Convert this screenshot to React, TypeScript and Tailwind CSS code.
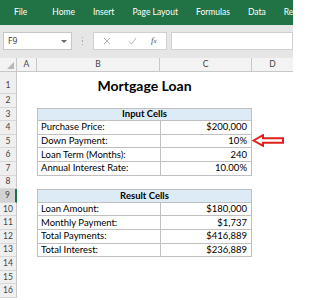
import React from "react";

const tabs = ["File", "Home", "Insert", "Page Layout", "Formulas", "Data", "Review"];

const inputRows = [
  { label: "Purchase Price:", value: "$200,000" },
  { label: "Down Payment:", value: "10%" },
  { label: "Loan Term (Months):", value: "240" },
  { label: "Annual Interest Rate:", value: "10.00%" },
];

const resultRows = [
  { label: "Loan Amount:", value: "$180,000" },
  { label: "Monthly Payment:", value: "$1,737" },
  { label: "Total Payments:", value: "$416,889" },
  { label: "Total Interest:", value: "$236,889" },
];

const RowHead = ({ n, tall, active }: { n: number; tall?: boolean; active?: boolean }) => (
  <div
    className={`w-[17px] shrink-0 flex justify-center text-[8.5px] text-[#444] border-b border-[#d8d8d8] ${
      tall ? "h-[22px] items-end pb-[1px]" : "h-[13.6px] items-center"
    } ${active ? "bg-[#d3d3d3] border-r-2 border-r-[#217346]" : "bg-[#efefef] border-r border-r-[#c8c8c8]"}`}
  >
    {n}
  </div>
);

const Spacer = () => <div className="w-[20px] shrink-0" />;

const TableHeader = ({ title }: { title: string }) => (
  <div className="w-[215px] h-full bg-[#ddebf7] border border-[#c0c0c0] flex items-center justify-center font-bold">
    {title}
  </div>
);

const TableRow = ({ label, value }: { label: string; value: string }) => (
  <div className="flex h-full">
    <div className="w-[123px] h-full border-l border-b border-[#c0c0c0] flex items-center pl-[3px]">{label}</div>
    <div className="w-[92px] h-full border-l border-r border-b border-[#c0c0c0] flex items-center justify-end pr-[4px]">
      {value}
    </div>
  </div>
);

export default function App() {
  const rows: { n: number; content?: React.ReactNode }[] = [];
  rows.push({ n: 2 });
  rows.push({ n: 3, content: <TableHeader title="Input Cells" /> });
  inputRows.forEach((r, i) => rows.push({ n: 4 + i, content: <TableRow {...r} /> }));
  rows.push({ n: 8 });
  rows.push({ n: 9, content: <TableHeader title="Result Cells" /> });
  resultRows.forEach((r, i) => rows.push({ n: 10 + i, content: <TableRow {...r} /> }));
  [14, 15, 16].forEach((n) => rows.push({ n }));

  return (
    <div className="w-[293px] h-[300px] overflow-hidden bg-white font-['Lato',sans-serif] relative">
      {/* ribbon */}
      <div className="h-[25px] bg-[#217346] flex items-center pl-[14px] text-white text-[8.5px] whitespace-nowrap overflow-hidden">
        {tabs.map((t, i) => (
          <span key={t} className={`shrink-0 ${i === 0 ? "mr-[25px]" : "mr-[18px]"}`}>
            {t}
          </span>
        ))}
      </div>

      {/* formula bar */}
      <div className="h-[33px] bg-[#e6e6e6] flex items-start pt-[7px] pl-[3px] gap-0">
        <div className="w-[69px] h-[18px] bg-white border border-[#c6c6c6] flex items-center justify-between px-[4px] text-[8.5px] text-[#333] font-['Open_Sans',sans-serif]">
          <span>F9</span>
          <span className="w-0 h-0 border-l-[3px] border-r-[3px] border-t-[3px] border-l-transparent border-r-transparent border-t-[#666]" />
        </div>
        <div className="w-[21px] h-[18px] flex flex-col items-center justify-center gap-[2px]">
          <span className="w-[1.5px] h-[1.5px] bg-[#aaa]" />
          <span className="w-[1.5px] h-[1.5px] bg-[#aaa]" />
          <span className="w-[1.5px] h-[1.5px] bg-[#aaa]" />
        </div>
        <div className="w-[74px] h-[18px] bg-white border border-[#d0d0d0] flex items-center text-[#b0b0b0]">
          <svg width="8" height="8" viewBox="0 0 8 8" className="ml-[9px]">
            <path d="M1 1L7 7M7 1L1 7" stroke="#b5b5b5" strokeWidth="1" />
          </svg>
          <svg width="9" height="8" viewBox="0 0 9 8" className="ml-[17px]">
            <path d="M1 4.5L3.5 7L8 1" stroke="#b5b5b5" strokeWidth="1" fill="none" />
          </svg>
          <span className="ml-[14px] text-[9px] italic text-[#555] font-['Liberation_Serif',serif]">
            f<span className="text-[7px]">x</span>
          </span>
        </div>
        <div className="ml-[4px] flex-1 h-[18px] bg-white border border-[#d0d0d0]" />
      </div>

      {/* column headers */}
      <div className="flex h-[14px] bg-[#f3f3f3] border-b border-[#c8c8c8] text-[8.5px] text-[#444]">
        <div className="w-[17px] h-full border-r border-[#c8c8c8] relative">
          <span className="absolute right-[2px] bottom-[2px] w-0 h-0 border-l-[7px] border-t-[7px] border-l-transparent border-t-transparent border-r-0 border-b-0 [border-bottom:7px_solid_#b8b8b8]" />
        </div>
        <div className="w-[20px] h-full border-r border-[#c8c8c8] flex items-center justify-center">A</div>
        <div className="w-[123px] h-full border-r border-[#c8c8c8] flex items-center justify-center">B</div>
        <div className="w-[92px] h-full border-r border-[#c8c8c8] flex items-center justify-center">C</div>
        <div className="flex-1 h-full flex items-center justify-center">D</div>
      </div>

      {/* row 1 */}
      <div className="flex">
        <RowHead n={1} tall />
        <Spacer />
        <div className="w-[215px] h-[22px] flex items-end justify-center pb-[1px] text-[14px] font-bold text-black leading-none">
          Mortgage Loan
        </div>
      </div>

      {rows.map((r) => (
        <div key={r.n} className="flex text-[9.5px] text-black">
          <RowHead n={r.n} active={r.n === 9} />
          <Spacer />
          <div className="h-[13.6px]">{r.content}</div>
        </div>
      ))}

      {/* red arrow next to Down Payment */}
      <svg className="absolute left-[252px] top-[134px]" width="33" height="13" viewBox="0 0 33 13">
        <path
          d="M1.5 6.5L11 1.2V4.2H31V8.8H11V11.8Z"
          fill="white"
          stroke="#e0201c"
          strokeWidth="2"
          strokeLinejoin="miter"
        />
      </svg>
    </div>
  );
}
